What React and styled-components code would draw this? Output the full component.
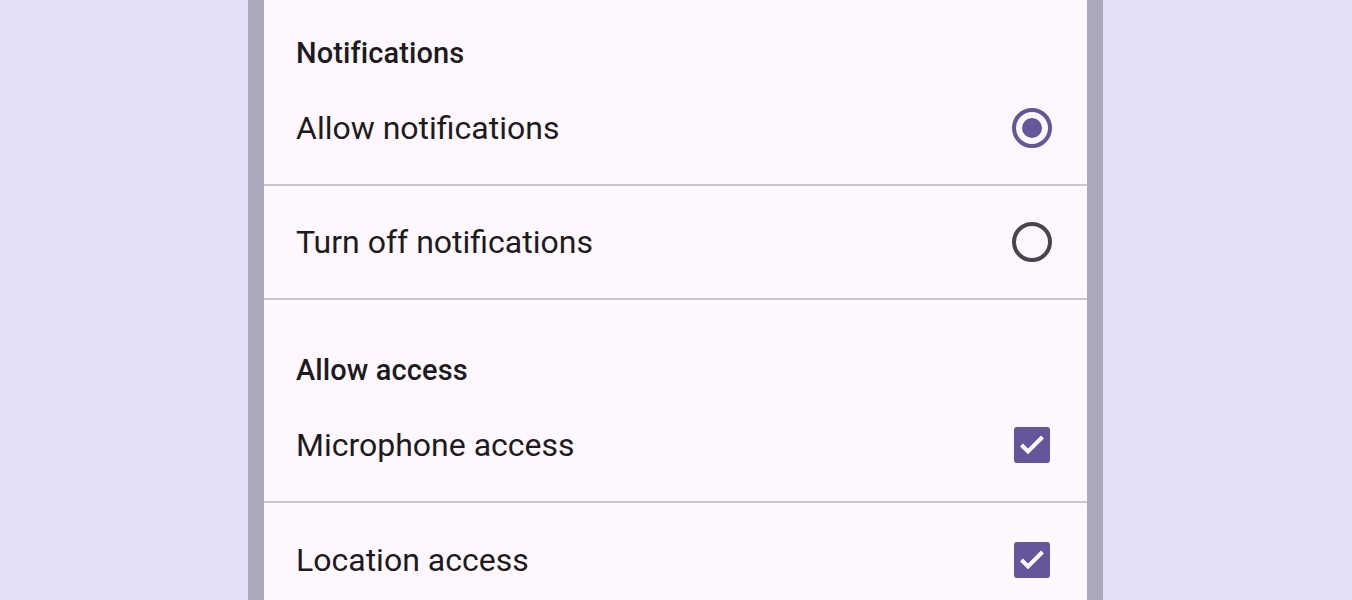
import React from "react";
import styled, { createGlobalStyle } from "styled-components";

const Global = createGlobalStyle`
  html, body { margin: 0; padding: 0; background: #E2E0F7; }
  body { font-family: Roboto, "Noto Sans", sans-serif; }
`;

const Page = styled.div`
  height: 600px;
  display: flex;
  justify-content: center;
  overflow: hidden;
`;

const Frame = styled.div`
  width: 823px;
  margin-left: -1px;
  border-left: 16px solid #ABAABA;
  border-right: 16px solid #ABAABA;
  background: #FFF7FE;
  overflow: hidden;
`;

const Section = styled.section`
  display: flex;
  flex-direction: column;
`;

const Heading = styled.h2`
  margin: 0;
  padding: ${(p) => (p.$first ? "37px" : "54px")} 32px 3px;
  font-size: 29px;
  line-height: 32px;
  letter-spacing: 0.1px;
  font-weight: 500;
  color: #1D1B20;
`;

const Row = styled.div`
  height: 114px;
  box-sizing: border-box;
  display: flex;
  align-items: center;
  justify-content: space-between;
  padding: 0 35px 0 32px;
  border-bottom: ${(p) => (p.$divider ? "2px solid #CAC4D0" : "none")};
`;

const Label = styled.span`
  font-size: 32px;
  line-height: 36px;
  color: #1D1B20;
`;

const RadioRing = styled.span`
  width: 40px;
  height: 40px;
  box-sizing: border-box;
  border-radius: 50%;
  border: 4px solid ${(p) => (p.$on ? "#65559B" : "#49454F")};
  display: flex;
  align-items: center;
  justify-content: center;
`;

const RadioDot = styled.span`
  width: 20px;
  height: 20px;
  border-radius: 50%;
  background: #65559B;
`;

const CheckBox = styled.span`
  width: 36px;
  height: 36px;
  margin-right: 2px;
  border-radius: 3px;
  background: #65559B;
  display: flex;
`;

const Radio = ({ on }) => (
  <RadioRing $on={on}>{on && <RadioDot />}</RadioRing>
);

const Check = () => (
  <CheckBox>
    <svg width="36" height="36" viewBox="0 0 36 36">
      <path d="M7.5 18l6.5 6.5L28.5 10" fill="none" stroke="#fff" strokeWidth="4" strokeLinecap="butt" strokeLinejoin="miter" />
    </svg>
  </CheckBox>
);

export default function App() {
  return (
    <>
      <Global />
      <Page>
        <Frame>
          <Section>
            <Heading $first>Notifications</Heading>
            <Row $divider>
              <Label>Allow notifications</Label>
              <Radio on />
            </Row>
            <Row $divider>
              <Label>Turn off notifications</Label>
              <Radio />
            </Row>
          </Section>
          <Section>
            <Heading>Allow access</Heading>
            <Row $divider>
              <Label>Microphone access</Label>
              <Check />
            </Row>
            <Row>
              <Label>Location access</Label>
              <Check />
            </Row>
          </Section>
        </Frame>
      </Page>
    </>
  );
}
